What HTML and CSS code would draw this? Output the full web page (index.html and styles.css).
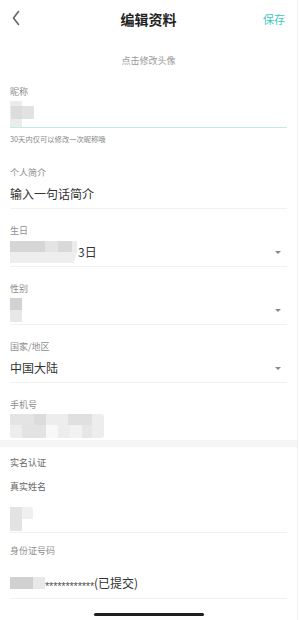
FILE: index.html
```html
<!DOCTYPE html>
<html lang="zh">
<head>
<meta charset="utf-8">
<link rel="stylesheet" href="styles.css">
</head>
<body>
<div class="page">
  <header class="nav">
    <svg class="back" width="8" height="16" viewBox="0 0 8 16"><path d="M6.5 1.5 L1.5 8 L6.5 14.5" fill="none" stroke="#666" stroke-width="1.6" stroke-linecap="round" stroke-linejoin="round"/></svg>
    <div class="title">编辑资料</div>
    <div class="save">保存</div>
  </header>
  <div class="avatar">点击修改头像</div>

  <section class="field nick">
    <div class="label">昵称</div>
    <div class="value">
      <svg width="26" height="26" viewBox="0 0 26 26"><rect x="0" y="0" width="12" height="26" fill="#ececec"/><rect x="1" y="5" width="23" height="13" fill="#dcdcdc"/><rect x="12" y="5" width="12" height="13" fill="#e2e2e2"/></svg>
    </div>
  </section>
  <div class="hint">30天内仅可以修改一次昵称哦</div>

  <section class="field first">
    <div class="label">个人简介</div>
    <div class="value"><span class="text">输入一句话简介</span></div>
  </section>

  <section class="field">
    <div class="label">生日</div>
    <div class="value">
      <svg width="68" height="22" viewBox="0 0 68 22"><rect x="0" y="0" width="35" height="11" fill="#d6d6d6"/><rect x="35" y="0" width="13" height="11" fill="#e4e4e4"/><rect x="48" y="0" width="14" height="11" fill="#d9d9d9"/><rect x="62" y="0" width="5" height="11" fill="#ebebeb"/><path d="M0 11 H67 L64 22 H0 Z" fill="#eeeeee"/></svg>
      <span class="text">3日</span>
      <span class="caret"></span>
    </div>
  </section>

  <section class="field">
    <div class="label">性别</div>
    <div class="value">
      <svg width="13" height="24" viewBox="0 0 13 24"><rect x="0" y="0" width="12" height="12" fill="#d2d2d2"/><rect x="0" y="12" width="12" height="12" fill="#e8e8e8"/></svg>
      <span class="caret"></span>
    </div>
  </section>

  <section class="field">
    <div class="label">国家/地区</div>
    <div class="value"><span class="text">中国大陆</span><span class="caret"></span></div>
  </section>

  <section class="field last">
    <div class="label">手机号</div>
    <div class="value">
      <svg width="94" height="24" viewBox="0 0 94 24"><rect x="0" y="0" width="94" height="24" rx="3" fill="#ededed"/><rect x="0" y="0" width="24" height="11" fill="#e4e4e4"/><rect x="24" y="0" width="12" height="11" fill="#dcdcdc"/><rect x="58" y="0" width="24" height="11" fill="#e0e0e0"/><rect x="12" y="11" width="24" height="13" fill="#e3e3e3"/><rect x="36" y="11" width="12" height="13" fill="#f8f8f8"/><rect x="60" y="11" width="12" height="13" fill="#f2f2f2"/><rect x="72" y="11" width="10" height="13" fill="#e6e6e6"/></svg>
    </div>
  </section>

  <div class="band"></div>

  <section class="real">
    <div class="label dark">实名认证</div>
    <div class="label dark gap">真实姓名</div>
    <div class="name-value">
      <svg width="23" height="24" viewBox="0 0 23 24"><rect x="0" y="0" width="12" height="24" fill="#e3e3e3"/><path d="M12 0 H20 Q23 0 23 4 V12 H12 Z" fill="#efefef"/></svg>
    </div>
    <div class="label gap2">身份证号码</div>
    <div class="id-value">
      <svg width="35" height="12" viewBox="0 0 35 12"><rect x="0" y="0" width="23" height="12" fill="#d0d0d0"/><rect x="23" y="0" width="12" height="12" fill="#e8e8e8"/></svg>
      <span class="stars">************</span><span class="text">(已提交)</span>
    </div>
  </section>

  <div class="home"></div>
</div>
</body>
</html>
```

FILE: styles.css
```css
html, body {
  margin: 0;
  padding: 0;
  background: #ffffff;
}
.page {
  width: 297px;
  height: 620px;
  border-right: 1px solid #f1f1f1;
  font-family: "Noto Sans CJK SC", "Liberation Sans", sans-serif;
  color: #333;
  display: flex;
  flex-direction: column;
  overflow: hidden;
}
.nav {
  height: 38px;
  display: flex;
  align-items: center;
  position: relative;
  padding: 0 12px 0 12px;
}
.back {
  display: block;
  margin-top: -2px;
}
.title {
  position: absolute;
  left: 0;
  right: 0;
  top: 10px;
  text-align: center;
  font-size: 14px;
  line-height: 18px;
  font-weight: 700;
  color: #222;
  pointer-events: none;
}
.save {
  margin-left: auto;
  font-size: 11px;
  line-height: 14px;
  color: #3fc8c0;
}
.avatar {
  height: 47px;
  box-sizing: border-box;
  padding-top: 16px;
  text-align: center;
  font-size: 9px;
  line-height: 14px;
  color: #999;
}
.field {
  margin: 15px 10px 0 10px;
  border-bottom: 1px solid #f1f1f1;
}
.field.nick {
  margin-top: 0;
  border-bottom: 1px solid #bfeae6;
}
.field.first {
  margin-top: 21px;
}
.field.last {
  border-bottom: none;
}
.label {
  font-size: 9px;
  line-height: 14px;
  color: #8e8e8e;
}
.label.dark {
  color: #666;
}
.value {
  height: 28px;
  display: flex;
  align-items: center;
}
.field.nick .value svg {
  margin-top: 1px;
}
.text {
  font-size: 12px;
  line-height: 16px;
  color: #333;
}
.caret {
  margin-left: auto;
  margin-right: 6px;
  width: 0;
  height: 0;
  border-left: 3px solid transparent;
  border-right: 3px solid transparent;
  border-top: 3px solid #8a8a8a;
}
.hint {
  margin: 5px 10px 0 10px;
  font-size: 7.3px;
  line-height: 12px;
  color: #888;
}
.band {
  height: 7px;
  background: #f5f5f5;
}
.real {
  padding: 9px 10px 0 10px;
  display: flex;
  flex-direction: column;
}
.real .gap {
  margin-top: 10px;
}
.name-value {
  padding-top: 13px;
  height: 25px;
  border-bottom: 1px solid #f1f1f1;
}
.name-value svg {
  display: block;
}
.gap2 {
  margin-top: 11px;
}
.id-value {
  padding-top: 15px;
  height: 25px;
  box-sizing: content-box;
  display: flex;
  align-items: flex-start;
  border-bottom: 1px solid #f1f1f1;
}
.id-value svg {
  margin-top: 4px;
}
.stars {
  font-family: "Liberation Sans", sans-serif;
  font-size: 11px;
  line-height: 20px;
  color: #555;
  margin-top: 3px;
  letter-spacing: -0.2px;
}
.id-value .text {
  line-height: 20px;
}
.home {
  width: 110px;
  height: 3px;
  border-radius: 2px;
  background: #1e1e1e;
  margin: 14px auto 0 auto;
}
```
